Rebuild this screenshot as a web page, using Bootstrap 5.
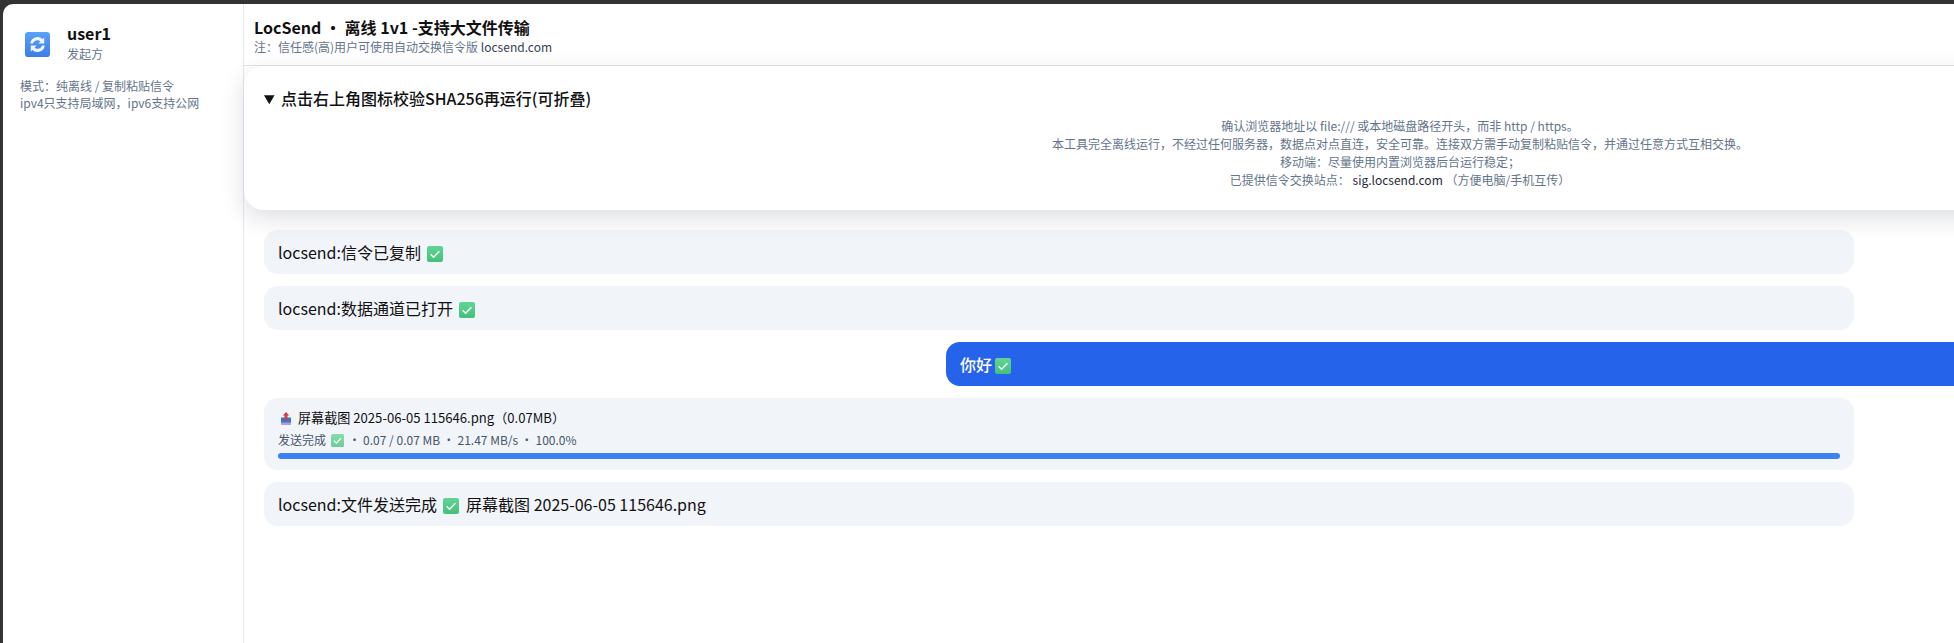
<!doctype html>
<html lang="zh">
<head>
<meta charset="utf-8">
<title>LocSend</title>
<link href="https://cdn.jsdelivr.net/npm/bootstrap@5.3.0/dist/css/bootstrap.min.css" rel="stylesheet">
<style>
html,body{height:100%;}
body{background:#333;overflow:hidden;padding:4px 0 0 3px;font-family:"Noto Sans CJK SC","Noto Sans",sans-serif;color:#111;}
.shell{width:2553px;height:639px;background:#fff;border-top-left-radius:10px;overflow:hidden;}
.side{width:241px;flex:none;border-right:1px solid #e5e9ef;padding:17px 17px;}
.side-top{gap:17px;}
.side-icon{width:25px;height:25px;margin:11px 0 0 5px;flex:none;}
.side-name{font-size:16px;font-weight:700;line-height:24px;}
.side-role{font-size:12px;line-height:18px;color:#64748b;}
.side-note{font-size:12px;line-height:17px;color:#64748b;margin-top:14px;white-space:nowrap;}
.main-col{width:2312px;flex:none;}
.top-bar{height:62px;padding:11px 10px 0;border-bottom:1px solid #dfe3e8;}
.top-title{font-size:16px;font-weight:700;line-height:24px;}
.top-sub{font-size:12px;line-height:16px;color:#64748b;}
.sub-link{color:#334155;}
.guide{height:144px;border-radius:20px;border-top-right-radius:0;padding:20px 20px 0;background:#fff;box-shadow:0 8px 24px rgba(15,23,42,.14);position:relative;}
.guide-head{font-size:16px;font-weight:500;line-height:24px;cursor:pointer;}
.guide-text{font-size:12px;line-height:18px;color:#64748b;text-align:center;margin-top:7px;}
.guide-text span{color:#1e293b;}
.feed{padding:20px 20px;gap:12px;}
.msg{width:1590px;min-height:44px;padding:10px 14px;background:#f1f4f9;border-radius:14px;font-size:16px;line-height:24px;}
.msg-out{background:#2563eb;color:#fff;align-self:flex-end;font-weight:500;}
.msg-file{height:72px;padding:10px 14px 0;}
.file-name{font-size:13.1px;line-height:20px;}
.file-stat{font-size:12px;line-height:18px;color:#475569;margin-top:3px;}
.file-bar{height:6px;background:#3b82f6;border-radius:3px;margin-top:4px;}
.tick{width:16px;height:16px;vertical-align:-3px;margin:0 3px;}
.tick-sm{width:13px;height:13px;vertical-align:-2px;margin:0 2px;opacity:.75;}
.tray{width:10px;height:13px;vertical-align:-2px;margin:0 7px 0 3px;}
</style>
</head>
<body>
<svg width="0" height="0" class="position-absolute" aria-hidden="true">
  <defs>
    <linearGradient id="grn" x1="0" y1="0" x2="0" y2="1"><stop offset="0" stop-color="#62d595"/><stop offset="1" stop-color="#44c07a"/></linearGradient>
    <symbol id="chk" viewBox="0 0 16 16"><rect width="16" height="16" rx="2" fill="url(#grn)"/><path d="M3.6 8.2l3 3L12.4 5.2" fill="none" stroke="#fff" stroke-width="1.4"/></symbol>
  </defs>
</svg>
<div class="shell d-flex">
  <aside class="side">
    <div class="d-flex side-top">
      <svg class="side-icon" viewBox="0 0 26 26" aria-hidden="true">
        <defs><linearGradient id="blu" x1="0" y1="0" x2="0" y2="1"><stop offset="0" stop-color="#5aa2f5"/><stop offset="1" stop-color="#3b7de8"/></linearGradient></defs>
        <rect width="26" height="26" rx="3.5" fill="url(#blu)"/>
        <path d="M5.5 12a7.5 7.5 0 0 1 12.8-4.6L20 5.6V12h-6.2l2.2-2.2a4.6 4.6 0 0 0-7.6 2.2z" fill="#eef3ff"/>
        <path d="M20.5 14a7.5 7.5 0 0 1-12.8 4.6L6 20.4V14h6.2L10 16.2a4.6 4.6 0 0 0 7.6-2.2z" fill="#eef3ff"/>
      </svg>
      <div>
        <div class="side-name">user1</div>
        <div class="side-role">发起方</div>
      </div>
    </div>
    <div class="side-note">模式：纯离线 / 复制粘贴信令<br>ipv4只支持局域网，ipv6支持公网</div>
  </aside>
  <main class="main-col">
    <header class="top-bar">
      <div class="top-title">LocSend ・ 离线 1v1 -支持大文件传输</div>
      <div class="top-sub">注：信任感(高)用户可使用自动交换信令版 <span class="sub-link">locsend.com</span></div>
    </header>
    <details class="guide" open>
      <summary class="guide-head">点击右上角图标校验SHA256再运行(可折叠)</summary>
      <div class="guide-text">
        确认浏览器地址以 file:/// 或本地磁盘路径开头，而非 http / https。<br>
        本工具完全离线运行，不经过任何服务器，数据点对点直连，安全可靠。连接双方需手动复制粘贴信令，并通过任意方式互相交换。<br>
        移动端：尽量使用内置浏览器后台运行稳定；<br>
        已提供信令交换站点： <span>sig.locsend.com</span> （方便电脑/手机互传）
      </div>
    </details>
    <section class="feed d-flex flex-column">
      <div class="msg">locsend:信令已复制 <svg class="tick" aria-hidden="true"><use href="#chk"/></svg></div>
      <div class="msg">locsend:数据通道已打开 <svg class="tick" aria-hidden="true"><use href="#chk"/></svg></div>
      <div class="msg msg-out">你好<svg class="tick" aria-hidden="true"><use href="#chk"/></svg></div>
      <div class="msg msg-file">
        <div class="file-name"><svg class="tray" viewBox="0 0 10 13" aria-hidden="true"><rect x="0" y="5.5" width="10" height="5.5" fill="#3b78c4"/><rect x="0" y="10.5" width="10" height="2.5" rx=".4" fill="#b49ad6"/><path d="M5 0L8.2 3.6H6.5V8h-3V3.6H1.8z" fill="#d9364f"/></svg>屏幕截图 2025-06-05 115646.png（0.07MB）</div>
        <div class="file-stat">发送完成 <svg class="tick-sm" aria-hidden="true"><use href="#chk"/></svg> ・ 0.07 / 0.07 MB ・ 21.47 MB/s ・ 100.0%</div>
        <div class="file-bar"></div>
      </div>
      <div class="msg">locsend:文件发送完成 <svg class="tick" aria-hidden="true"><use href="#chk"/></svg> 屏幕截图 2025-06-05 115646.png</div>
    </section>
  </main>
</div>
<script src="https://cdn.jsdelivr.net/npm/bootstrap@5.3.0/dist/js/bootstrap.bundle.min.js"></script>
</body>
</html>
